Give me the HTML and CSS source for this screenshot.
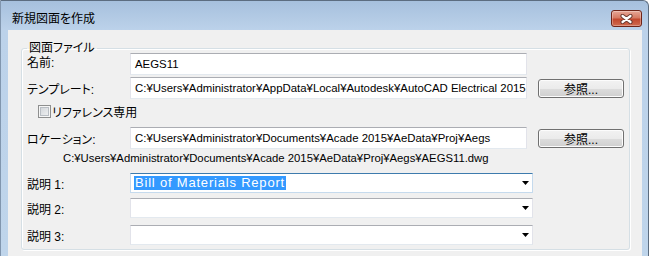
FILE: index.html
```html
<!DOCTYPE html>
<html lang="ja">
<head>
    <meta charset="UTF-8">
    <title>新規図面を作成</title>
    <link rel="stylesheet" href="styles.css">
</head>
<body>

<div class="window">
    <div class="titlebar">
        <span class="title">新規図面を作成</span>
        <span class="close">
            <svg width="13" height="10" viewBox="0 0 13 10">
                <path d="M2.5 2 L10.5 8 M10.5 2 L2.5 8" stroke="#6a3a32" stroke-width="4.2" stroke-linecap="round"/>
                <path d="M2.5 2 L10.5 8 M10.5 2 L2.5 8" stroke="#fff" stroke-width="2.2" stroke-linecap="round"/>
            </svg>
        </span>
    </div>

    <div class="client">
        <fieldset class="group">
            <legend>図面ファイル</legend>

            <div class="row row-name">
                <label class="label label-name">名前:</label>
                <div class="field">AEGS11</div>
            </div>

            <div class="row row-template">
                <label class="label">テンプレート:</label>
                <div class="field">C:¥Users¥Administrator¥AppData¥Local¥Autodesk¥AutoCAD Electrical 2015</div>
                <button class="browse">参照...</button>
            </div>

            <div class="row row-check">
                <span class="checkbox"></span>
                <span>リファレンス専用</span>
            </div>

            <div class="row row-location">
                <label class="label">ロケーション:</label>
                <div class="field">C:¥Users¥Administrator¥Documents¥Acade 2015¥AeData¥Proj¥Aegs</div>
                <button class="browse">参照...</button>
            </div>

            <div class="path">C:¥Users¥Administrator¥Documents¥Acade 2015¥AeData¥Proj¥Aegs¥AEGS11.dwg</div>

            <div class="row row-desc">
                <label class="label">説明 1:</label>
                <div class="combo focused">
                    <span class="sel">Bill of Materials Report</span>
                    <svg class="arrow" width="7" height="4" viewBox="0 0 7 4"><path d="M0 0 H7 L3.5 4 Z" fill="#000"/></svg>
                </div>
            </div>

            <div class="row row-desc desc-2">
                <label class="label">説明 2:</label>
                <div class="combo">
                    <span></span>
                    <svg class="arrow" width="7" height="4" viewBox="0 0 7 4"><path d="M0 0 H7 L3.5 4 Z" fill="#000"/></svg>
                </div>
            </div>

            <div class="row row-desc desc-3">
                <label class="label">説明 3:</label>
                <div class="combo">
                    <span></span>
                    <svg class="arrow" width="7" height="4" viewBox="0 0 7 4"><path d="M0 0 H7 L3.5 4 Z" fill="#000"/></svg>
                </div>
            </div>
        </fieldset>
    </div>
</div>

</body>
</html>
```

FILE: styles.css
```css
* {
    box-sizing: border-box;
}

body {
    margin: 0;
    background: #fff;
    color: #000;
    font-family: "Liberation Sans", "Noto Sans CJK JP", sans-serif;
    font-size: 12px;
    font-feature-settings: "palt";
    overflow: hidden;
}

.window {
    width: 649px;
    height: 256px;
    display: flex;
    flex-direction: column;
    padding: 0 6px 0 7px;
    border-top: 1px solid #5c6d80;
    border-right: 1px solid #5c6d80;
    border-left: 1px solid #8196ae;
    border-top-right-radius: 6px;
    background: linear-gradient(#a6c0dd, #bcd2ea 29px, #bfd5eb);
    overflow: hidden;
}

.titlebar {
    height: 29px;
    flex: none;
    display: flex;
    justify-content: space-between;
    align-items: flex-start;
}

.title {
    margin: 11px 0 0 4px;
    line-height: 14px;
}

.close {
    margin-top: 9px;
    width: 31px;
    height: 17px;
    display: flex;
    justify-content: center;
    align-items: center;
    border: 1px solid #6e2418;
    border-radius: 3px;
    background: linear-gradient(#e6a797, #d67a63 45%, #c2482e 55%, #d06b50);
    box-shadow: inset 0 0 0 1px rgba(255, 255, 255, 0.3);
}

.client {
    flex: 1;
    background: #f0f0f0;
    padding: 13px 0 0 13px;
}

.group {
    margin: 0;
    width: 609px;
    padding: 0 5px 4px;
    border: 1px solid #d5dfe5;
    border-radius: 3px;
    box-shadow: inset 1px 1px 0 #fff, 1px 1px 0 #fff;
}

.group legend {
    padding: 0 2px;
    line-height: 10px;
}

.row {
    display: flex;
    align-items: center;
    height: 22px;
}

.label {
    width: 103px;
    flex: none;
}

.label-name {
    margin-top: -5px;
}

.field {
    width: 397px;
    height: 22px;
    flex: none;
    padding: 0 4px;
    background: #fff;
    border: 1px solid #e2e3ea;
    border-top-color: #abadb3;
    border-bottom-color: #e3e9ef;
    font-size: 11.4px;
    line-height: 20px;
    white-space: nowrap;
    overflow: hidden;
}

.browse {
    margin-left: 11px;
    width: 86px;
    height: 19px;
    padding: 0;
    font: inherit;
    color: #000;
    border: 1px solid #707070;
    border-radius: 3px;
    background: linear-gradient(#f2f2f2, #ebebeb 50%, #dddddd 50%, #cfcfcf);
    box-shadow: inset 0 0 0 1px #fcfcfc;
}

.row-template {
    margin-top: 2px;
}

.row-check {
    height: 27px;
    padding-left: 11px;
    padding-bottom: 2px;
}

.checkbox {
    width: 13px;
    height: 13px;
    margin-right: 1px;
    border: 1px solid #8e8f8f;
    background: linear-gradient(135deg, #cdd1d6, #f4f5f6);
    box-shadow: inset 0 0 0 1px #f6f6f6, inset 0 0 0 2px #b9bec4;
}

.row-location {
    margin-top: 1px;
}

.path {
    height: 24px;
    padding: 2px 0 0 36px;
    font-size: 11.3px;
    line-height: 14px;
    white-space: nowrap;
}

.row-desc {
    height: 20px;
}

.desc-2 {
    margin-top: 5px;
}

.desc-3 {
    margin-top: 7px;
}

.combo {
    width: 403px;
    height: 20px;
    flex: none;
    display: flex;
    justify-content: space-between;
    align-items: center;
    padding: 0 3px;
    background: #fff;
    border: 1px solid #e2e3ea;
    border-top-color: #abadb3;
    border-bottom-color: #e3e9ef;
}

.combo.focused {
    border-color: #c5daed;
    border-top-color: #3d7bad;
}

.sel {
    padding: 0 1px;
    background: #3399ff;
    color: #fff;
    font-size: 13px;
    line-height: 14px;
    letter-spacing: 0.8px;
}

.arrow {
    display: block;
}
```
